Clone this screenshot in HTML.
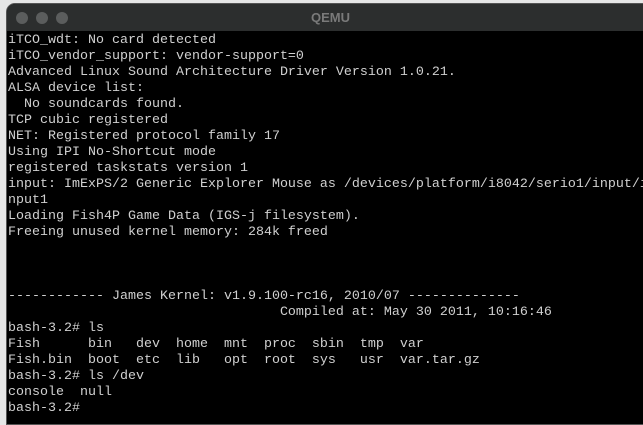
<!DOCTYPE html>
<html><head><style>
html,body{margin:0;padding:0;width:643px;height:419px;overflow:hidden;background:#e6e6e6;}
.win{position:absolute;left:6px;top:3px;width:650px;height:420px;background:#000;border-radius:9px 0 0 0;overflow:hidden;border:1px solid #555;}
.tb{height:27px;background:#2c2e2e;position:relative;}
.dot{position:absolute;top:8px;width:12px;height:12px;border-radius:50%;background:#5b5d5d;}
.title{position:absolute;left:304px;top:6px;font:bold 13px "Liberation Sans",sans-serif;color:#7a7a7a;}
pre{margin:0;position:absolute;left:1px;top:29px;font:13.33px/16px "Liberation Mono",monospace;color:#d0d0d0;white-space:pre;}
</style></head><body>
<div class="win">
<div class="tb"><div class="dot" style="left:9px"></div><div class="dot" style="left:29px"></div><div class="dot" style="left:49px"></div><div class="title">QEMU</div></div>
<pre>iTCO_wdt: No card detected
iTCO_vendor_support: vendor-support=0
Advanced Linux Sound Architecture Driver Version 1.0.21.
ALSA device list:
  No soundcards found.
TCP cubic registered
NET: Registered protocol family 17
Using IPI No-Shortcut mode
registered taskstats version 1
input: ImExPS/2 Generic Explorer Mouse as /devices/platform/i8042/serio1/input/i
nput1
Loading Fish4P Game Data (IGS-j filesystem).
Freeing unused kernel memory: 284k freed



------------ James Kernel: v1.9.100-rc16, 2010/07 --------------
                                  Compiled at: May 30 2011, 10:16:46
bash-3.2# ls
Fish      bin   dev  home  mnt  proc  sbin  tmp  var
Fish.bin  boot  etc  lib   opt  root  sys   usr  var.tar.gz
bash-3.2# ls /dev
console  null
bash-3.2#</pre>
</div>
</body></html>
